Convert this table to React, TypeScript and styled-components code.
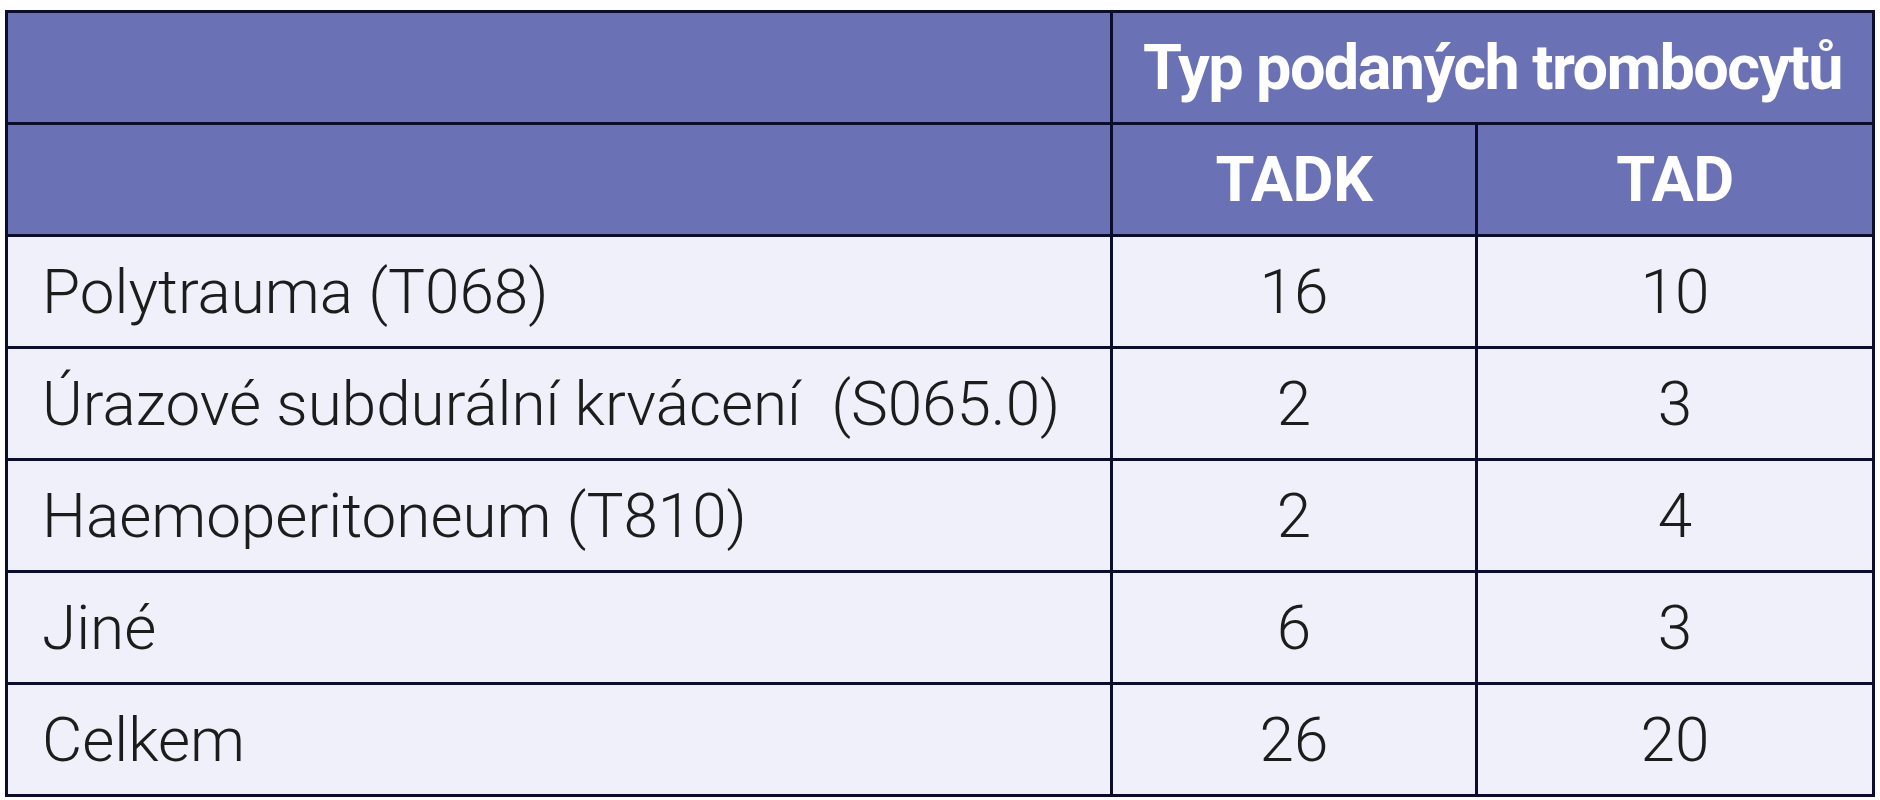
import React from "react";
import styled, { createGlobalStyle } from "styled-components";

const Global = createGlobalStyle`
  html, body {
    margin: 0;
    padding: 0;
    background: #ffffff;
  }
`;

type Row = {
  label: string;
  tadk: number;
  tad: number;
};

const rows: Row[] = [
  { label: "Polytrauma (T068)", tadk: 16, tad: 10 },
  { label: "Úrazové subdurální krvácení  (S065.0)", tadk: 2, tad: 3 },
  { label: "Haemoperitoneum (T810)", tadk: 2, tad: 4 },
  { label: "Jiné", tadk: 6, tad: 3 },
  { label: "Celkem", tadk: 26, tad: 20 },
];

const Page = styled.div`
  padding: 10px 8px 0 5px;
`;

const Table = styled.table`
  width: 1867px;
  border-collapse: collapse;
  table-layout: fixed;
  border: 3px solid #0c0c2c;
`;

const HeadCell = styled.th<{ $title?: boolean }>`
  height: 109px;
  padding: 0;
  background: #6a71b4;
  color: #ffffff;
  border: 3px solid #0c0c2c;
  font-family: "Roboto", "Liberation Sans", sans-serif;
  font-size: 63px;
  font-weight: 700;
  letter-spacing: ${(p) => (p.$title ? "-1.6px" : "-0.5px")};
  text-align: center;
  vertical-align: middle;
  white-space: nowrap;
`;

const Cell = styled.td<{ $num?: boolean }>`
  height: 109px;
  padding: ${(p) => (p.$num ? "0" : "0 0 0 34px")};
  background: #eff0f9;
  color: #1c1c1c;
  border: 3px solid #0c0c2c;
  font-family: "Roboto", "Liberation Sans", sans-serif;
  font-size: 62px;
  font-weight: 300;
  text-align: ${(p) => (p.$num ? "center" : "left")};
  vertical-align: middle;
  white-space: pre;
`;

export default function App() {
  return (
    <>
      <Global />
      <Page>
        <Table>
          <colgroup>
            <col style={{ width: 1105 }} />
            <col style={{ width: 365 }} />
            <col style={{ width: 397 }} />
          </colgroup>
          <thead>
            <tr>
              <HeadCell />
              <HeadCell colSpan={2} $title>
                Typ podaných trombocytů
              </HeadCell>
            </tr>
            <tr>
              <HeadCell />
              <HeadCell>TADK</HeadCell>
              <HeadCell>TAD</HeadCell>
            </tr>
          </thead>
          <tbody>
            {rows.map((r) => (
              <tr key={r.label}>
                <Cell>{r.label}</Cell>
                <Cell $num>{r.tadk}</Cell>
                <Cell $num>{r.tad}</Cell>
              </tr>
            ))}
          </tbody>
        </Table>
      </Page>
    </>
  );
}
